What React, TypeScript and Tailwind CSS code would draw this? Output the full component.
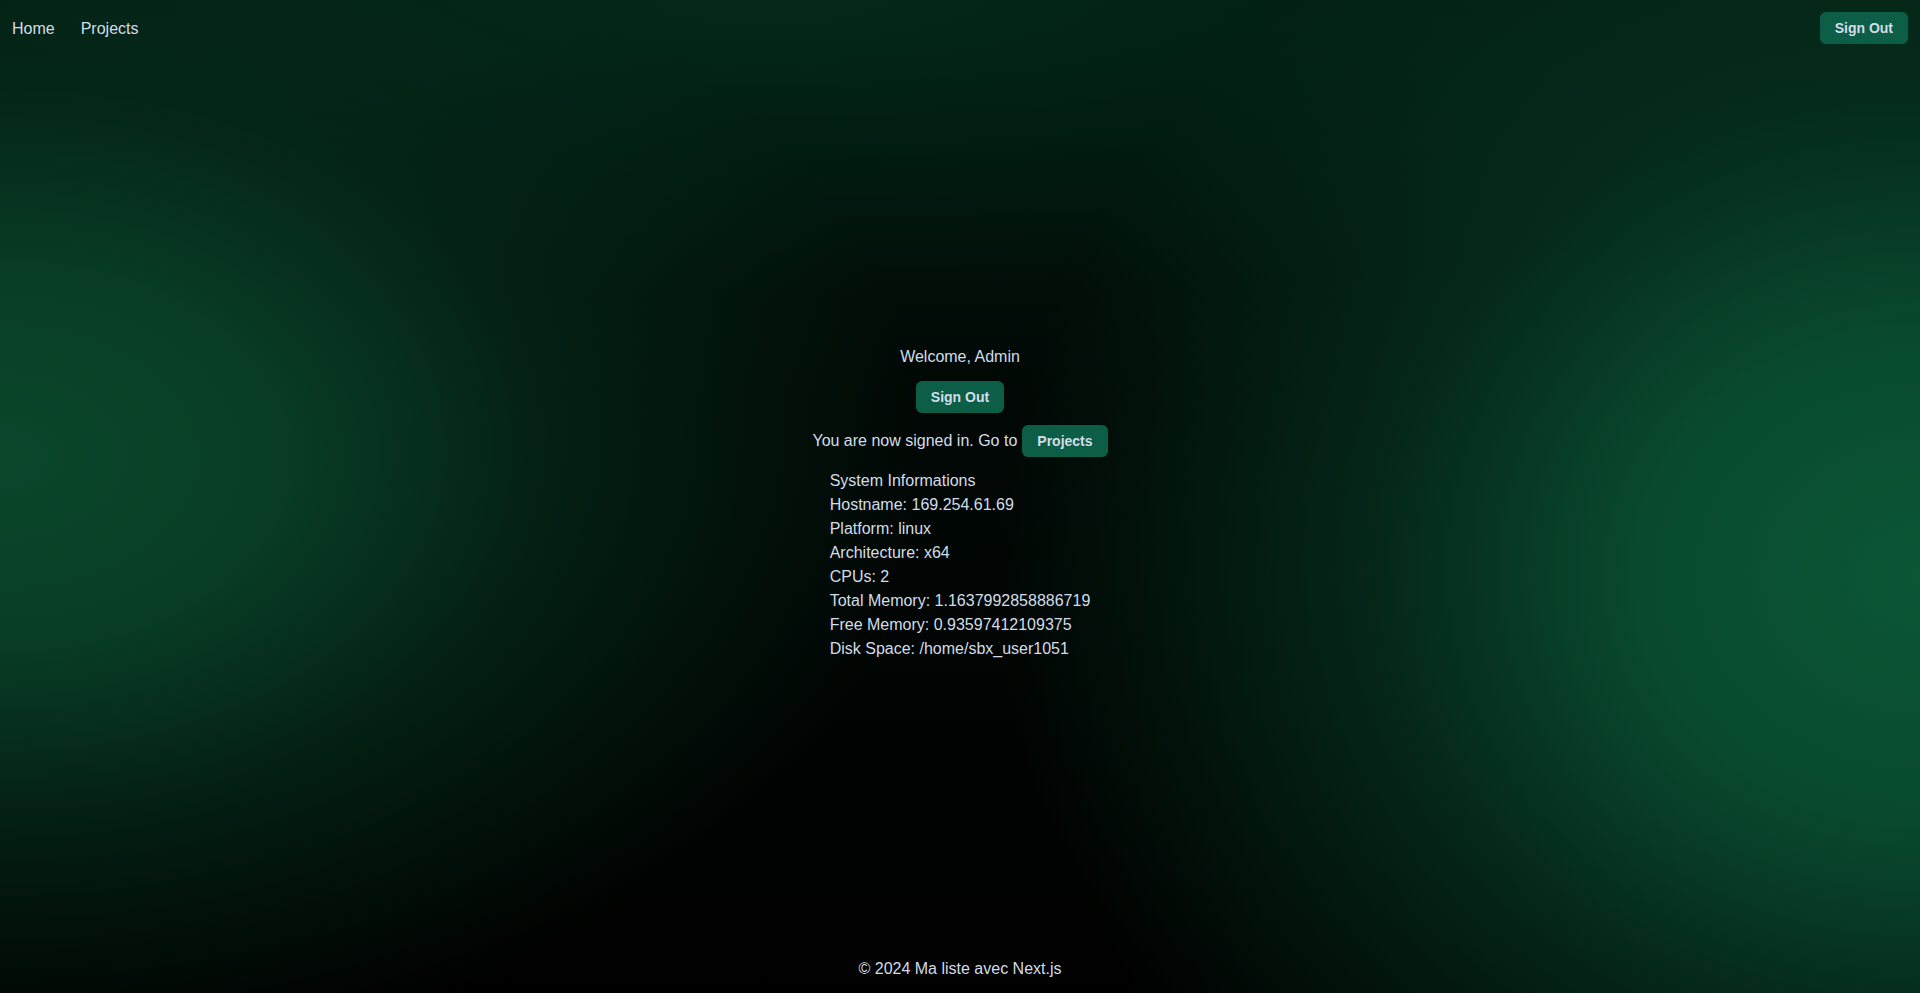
import React from "react"

const sysInfo = [
    "System Informations",
    "Hostname: 169.254.61.69",
    "Platform: linux",
    "Architecture: x64",
    "CPUs: 2",
    "Total Memory: 1.1637992858886719",
    "Free Memory: 0.93597412109375",
    "Disk Space: /home/sbx_user1051",
]

function Button({ children }: { children: React.ReactNode }) {
    return (
        <button className="rounded-md bg-[#0c5e46] px-[15px] py-1.5 text-sm font-bold leading-5 text-[#d3dde8]">
            {children}
        </button>
    )
}

export default function App() {
    return (
        <div
            className="flex min-h-screen flex-col text-base leading-6 text-[#d3dde8] bg-[#010503] bg-[radial-gradient(ellipse_48%_62%_at_0%_46%,#0a472b_0%,#083d25_30%,rgba(5,42,25,0.7)_60%,transparent_100%),radial-gradient(ellipse_48%_80%_at_100%_58%,#0b5636_0%,#094a2e_30%,rgba(6,52,32,0.7)_60%,transparent_100%),radial-gradient(ellipse_75%_30%_at_40%_0%,#03281a_0%,rgba(2,32,20,0.6)_55%,transparent_100%),linear-gradient(180deg,#021a10_0%,#010805_40%,#000000_100%)]"
            style={{ fontFamily: '"Liberation Sans", Arial, sans-serif' }}
        >
            {/* Header */}
            <header className="flex items-center justify-between p-3">
                <nav className="flex items-center gap-[26px] pt-0.5">
                    <a href="#">Home</a>
                    <a href="#">Projects</a>
                </nav>
                <Button>Sign Out</Button>
            </header>

            {/* Main */}
            <main className="flex flex-1 flex-col items-center justify-center gap-3 pt-1">
                <p>Welcome, Admin</p>
                <Button>Sign Out</Button>
                <div className="flex items-center gap-[5px]">
                    <span>You are now signed in. Go to</span>
                    <Button>Projects</Button>
                </div>
                <div className="flex flex-col">
                    {sysInfo.map((line) => (
                        <div key={line}>{line}</div>
                    ))}
                </div>
            </main>

            {/* Footer */}
            <footer className="p-3 text-center">© 2024 Ma liste avec Next.js</footer>
        </div>
    )
}
